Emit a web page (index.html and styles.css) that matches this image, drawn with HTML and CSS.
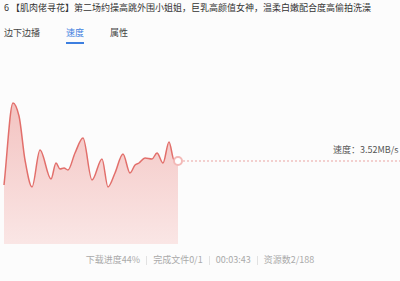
FILE: index.html
```html
<!DOCTYPE html>
<html lang="zh-CN">
<head>
  <meta charset="UTF-8" />
  <title>任务详情 - 速度</title>
  <link rel="stylesheet" href="styles.css">
</head>
<body>

<div class="task-title">6 【肌肉佬寻花】第二场约操高跳外围小姐姐，巨乳高颜值女神，温柔白嫩配合度高偷拍洗澡</div>

<div class="tabs">
  <span class="tab">边下边播</span>
  <span class="tab active">速度</span>
  <span class="tab">属性</span>
</div>

<div class="chart">
  <svg class="chart-svg" width="400" height="155" viewBox="0 0 400 155">
    <defs>
      <linearGradient id="fillGrad" x1="0" y1="0" x2="0" y2="1">
        <stop offset="0" stop-color="#f3c3c1" />
        <stop offset="1" stop-color="#fae6e5" />
      </linearGradient>
    </defs>
    <path class="area" d="M4,95 C7,68 10,13 13,13 C15,13 17,18 19,26 C21,34 23,59 25,70 C27.3,82.8 29.7,97 32,97 C34.7,97 37.3,60 40,60 C43.7,60 47.3,89 51,89 C52.7,89 54.3,73 56,73 C57.3,73 58.7,79 60,79 C61.3,79 62.7,78 64,78 C65.3,78 66.7,80 68,80 C70.3,80 72.7,67.9 75,63 C77.7,57.4 80.3,48 83,48 C86,48 89,90 92,90 C95.3,90 98.7,69 102,69 C104,69 106,97 108,97 C110.3,97 112.7,88.1 115,83 C117.7,77.1 120.3,64 123,64 C125.3,64 127.7,83 130,83 C131.7,83 133.3,76.8 135,75 C136.3,73.5 137.7,73.9 139,73 C141,71.6 143,68 145,68 C147.3,68 149.7,69 152,69 C153.7,69 155.3,63 157,63 C159,63 161,73 163,73 C165,73 167,52 169,52 C170.7,52 172.3,69.5 174,70 C175.3,70.4 176.7,71 178,71 L178,154 L4,154 Z" />
    <path class="line" d="M4,95 C7,68 10,13 13,13 C15,13 17,18 19,26 C21,34 23,59 25,70 C27.3,82.8 29.7,97 32,97 C34.7,97 37.3,60 40,60 C43.7,60 47.3,89 51,89 C52.7,89 54.3,73 56,73 C57.3,73 58.7,79 60,79 C61.3,79 62.7,78 64,78 C65.3,78 66.7,80 68,80 C70.3,80 72.7,67.9 75,63 C77.7,57.4 80.3,48 83,48 C86,48 89,90 92,90 C95.3,90 98.7,69 102,69 C104,69 106,97 108,97 C110.3,97 112.7,88.1 115,83 C117.7,77.1 120.3,64 123,64 C125.3,64 127.7,83 130,83 C131.7,83 133.3,76.8 135,75 C136.3,73.5 137.7,73.9 139,73 C141,71.6 143,68 145,68 C147.3,68 149.7,69 152,69 C153.7,69 155.3,63 157,63 C159,63 161,73 163,73 C165,73 167,52 169,52 C170.7,52 172.3,69.5 174,70 C175.3,70.4 176.7,71 178,71" />
    <line class="guide" x1="183" y1="71" x2="400" y2="71" />
    <circle class="dot" cx="178" cy="71" r="4" />
  </svg>
  <div class="speed-label">速度：3.52MB/s</div>
</div>

<div class="stats">
  <span>下载进度44%</span>
  <span class="sep"></span>
  <span>完成文件0/1</span>
  <span class="sep"></span>
  <span>00:03:43</span>
  <span class="sep"></span>
  <span>资源数2/188</span>
</div>

</body>
</html>
```

FILE: styles.css
```css
body {
  margin: 0;
  width: 400px;
  height: 281px;
  overflow: hidden;
  background: #fcfcfc;
  font-family: "Microsoft YaHei", "Noto Sans CJK SC", sans-serif;
  font-size: 9px;
  line-height: 12px;
  color: #333;
}
.task-title {
  margin-top: 2px;
  padding-left: 4px;
  white-space: nowrap;
  color: #333;
}
.tabs {
  display: flex;
  gap: 26px;
  margin-top: 13px;
  padding-left: 4px;
}
.tab {
  padding-bottom: 3px;
  border-bottom: 2px solid transparent;
  color: #444;
}
.tab.active {
  color: #3d7fe0;
  border-bottom-color: #3d7fe0;
}
.chart {
  position: relative;
  margin-top: 46px;
  height: 155px;
}
.chart-svg {
  display: block;
}
.area {
  fill: url(#fillGrad);
}
.line {
  fill: none;
  stroke: #e26f6b;
  stroke-width: 1.5;
}
.guide {
  stroke: #eaa3a1;
  stroke-width: 1;
  stroke-dasharray: 2 2;
}
.dot {
  fill: #fff;
  stroke: #f3b9b7;
  stroke-width: 2;
}
.speed-label {
  position: absolute;
  left: 333px;
  top: 54px;
  white-space: nowrap;
  color: #555;
}
.stats {
  display: flex;
  justify-content: center;
  align-items: center;
  gap: 6px;
  margin-top: 9px;
  color: #aaa;
}
.sep {
  width: 1px;
  height: 9px;
  background: #e2e2e2;
}
```
